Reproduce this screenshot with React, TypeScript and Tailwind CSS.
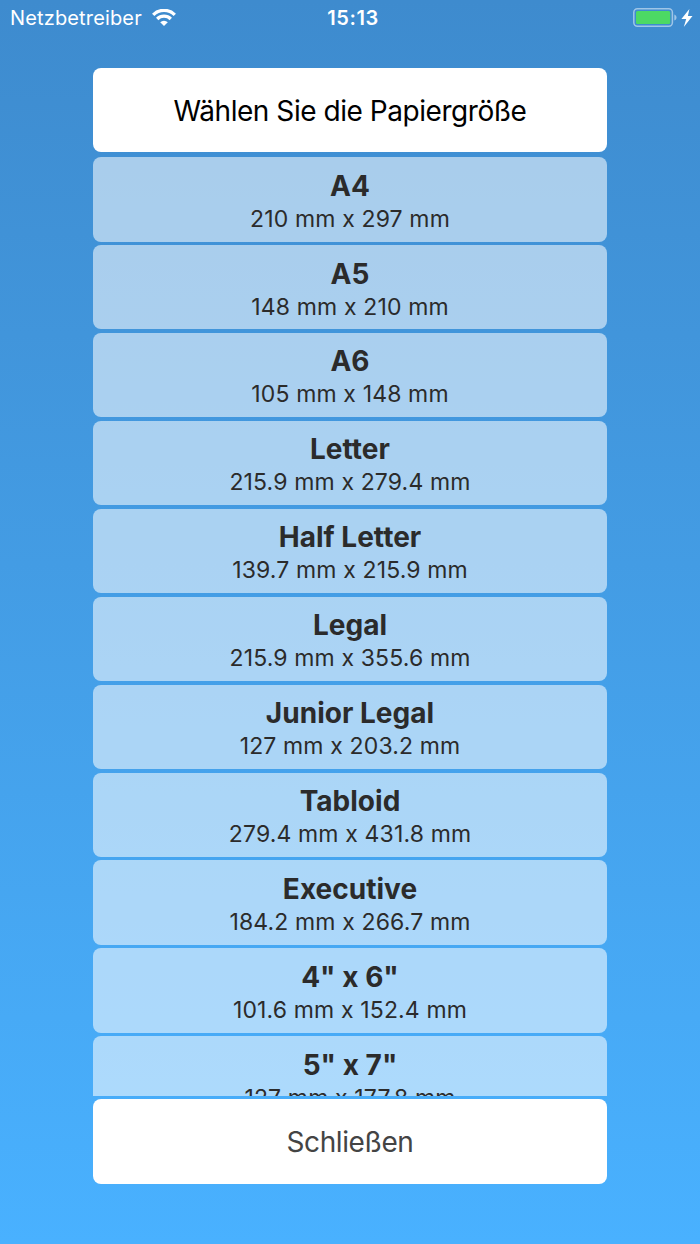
interface PaperSize {
  name: string;
  dimensions: string;
}

const PAPER_SIZES: PaperSize[] = [
  { name: "A4", dimensions: "210 mm x 297 mm" },
  { name: "A5", dimensions: "148 mm x 210 mm" },
  { name: "A6", dimensions: "105 mm x 148 mm" },
  { name: "Letter", dimensions: "215.9 mm x 279.4 mm" },
  { name: "Half Letter", dimensions: "139.7 mm x 215.9 mm" },
  { name: "Legal", dimensions: "215.9 mm x 355.6 mm" },
  { name: "Junior Legal", dimensions: "127 mm x 203.2 mm" },
  { name: "Tabloid", dimensions: "279.4 mm x 431.8 mm" },
  { name: "Executive", dimensions: "184.2 mm x 266.7 mm" },
  { name: '4" x 6"', dimensions: "101.6 mm x 152.4 mm" },
  { name: '5" x 7"', dimensions: "127 mm x 177.8 mm" },
];

export default function App() {
  return (
    <div className="flex h-[1244px] w-[700px] flex-col overflow-hidden bg-linear-to-b from-[#3e8bce] to-[#49b1ff] font-['Inter',sans-serif]">
      <StatusBar />

      <main className="mx-auto mt-[32px] flex w-[514px] flex-col">
        <h1 className="flex h-[84.3px] items-center justify-center rounded-lg bg-white pt-px text-[28px] tracking-[-0.45px] text-black">
          Wählen Sie die Papiergröße
        </h1>

        <ul className="mt-[5px] flex h-[938.5px] flex-col gap-[3.6px] overflow-hidden">
          {PAPER_SIZES.map(size => (
            <PaperSizeRow key={size.name} size={size} />
          ))}
        </ul>

        <button
          type="button"
          className="mt-[3.7px] h-[84.5px] rounded-lg bg-white pt-px text-[28px] tracking-[-0.4px] text-[#444]"
        >
          Schließen
        </button>
      </main>
    </div>
  );
}

function StatusBar() {
  return (
    <header className="grid h-[36px] grid-cols-3 items-center pr-[7px] pl-2.5 text-white">
      <div className="flex items-center gap-2.5 text-[20px] leading-none">
        <span className="tracking-[0.15px]">Netzbetreiber</span>
        <WifiIcon />
      </div>
      <span className="pl-[3px] text-center text-[20px] leading-none font-semibold tracking-[0.6px]">15:13</span>
      <div className="flex items-center justify-end gap-1">
        <BatteryIcon />
        <BoltIcon />
      </div>
    </header>
  );
}

function PaperSizeRow({ size }: { size: PaperSize }) {
  return (
    <li className="flex h-[84.3px] shrink-0 flex-col items-center rounded-lg bg-white/55 pt-[11.4px] text-[#2b2b2b]">
      <span className="text-[28px] leading-[34px] font-bold tracking-[0.02px]">{size.name}</span>
      <span className="text-[23px] leading-[33px] tracking-[0.14px]">{size.dimensions}</span>
    </li>
  );
}

function WifiIcon() {
  return (
    <svg className="mb-[2px] h-[17px] w-6" viewBox="0 0 24 17" fill="none" stroke="currentColor" strokeWidth={3.3}>
      <path d="M1.2 5.8a15.3 15.3 0 0 1 21.6 0" />
      <path d="M5.2 10a9.6 9.6 0 0 1 13.6 0" />
      <path d="M12 17l-3.8-3.8a5.4 5.4 0 0 1 7.6 0z" fill="currentColor" stroke="none" />
    </svg>
  );
}

function BatteryIcon() {
  return (
    <svg className="mb-[2px] h-[19px] w-11" viewBox="0 0 44 19" fill="none">
      <rect x="0.8" y="0.8" width="38.6" height="17.4" rx="3.6" stroke="white" strokeOpacity={0.5} strokeWidth={1.5} />
      <rect x="3" y="3" width="34.2" height="13" rx="1.6" fill="#4cd964" />
      <path d="M41.3 6.4c1.4.5 2.2 1.7 2.2 3.1s-.8 2.6-2.2 3.1z" fill="white" fillOpacity={0.5} />
    </svg>
  );
}

function BoltIcon() {
  return (
    <svg className="h-[18px] w-3" viewBox="0 0 12 18" fill="currentColor">
      <path d="M8.4 0L0.4 10h4.8L2.8 18 11.5 7H6.9z" />
    </svg>
  );
}
